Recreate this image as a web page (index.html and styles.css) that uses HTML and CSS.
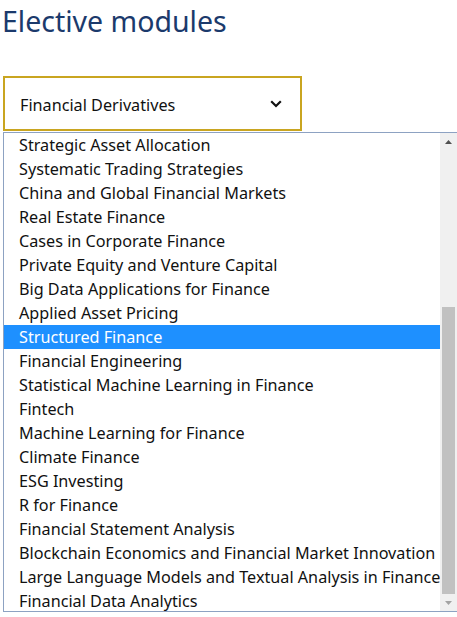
FILE: index.html
```html
<!DOCTYPE html>
<html lang="en">
<head>
<meta charset="utf-8">
<title>Elective modules</title>
<link rel="stylesheet" href="styles.css">
</head>
<body>
<main class="page">
  <h1 class="title">Elective modules</h1>
  <div class="picker">
    <div class="picker-field">
      <span class="picker-value">Financial Derivatives</span>
      <svg class="chevron" width="12" height="8" viewBox="0 0 12 8" aria-hidden="true">
        <polyline points="1.2,1.2 6,6 10.8,1.2" fill="none" stroke="#111" stroke-width="2.2"/>
      </svg>
    </div>
    <div class="listbox">
      <ul class="options">
        <li class="option">Strategic Asset Allocation</li>
        <li class="option">Systematic Trading Strategies</li>
        <li class="option">China and Global Financial Markets</li>
        <li class="option">Real Estate Finance</li>
        <li class="option">Cases in Corporate Finance</li>
        <li class="option">Private Equity and Venture Capital</li>
        <li class="option">Big Data Applications for Finance</li>
        <li class="option">Applied Asset Pricing</li>
        <li class="option is-active">Structured Finance</li>
        <li class="option">Financial Engineering</li>
        <li class="option">Statistical Machine Learning in Finance</li>
        <li class="option">Fintech</li>
        <li class="option">Machine Learning for Finance</li>
        <li class="option">Climate Finance</li>
        <li class="option">ESG Investing</li>
        <li class="option">R for Finance</li>
        <li class="option">Financial Statement Analysis</li>
        <li class="option">Blockchain Economics and Financial Market Innovation</li>
        <li class="option">Large Language Models and Textual Analysis in Finance</li>
        <li class="option">Financial Data Analytics</li>
      </ul>
      <div class="scrollbar" aria-hidden="true">
        <div class="scroll-btn">
          <svg width="7" height="4" viewBox="0 0 7 4"><polygon points="0,4 3.5,0 7,4" fill="#505050"/></svg>
        </div>
        <div class="scroll-track">
          <div class="scroll-thumb" style="height: 287px"></div>
        </div>
        <div class="scroll-btn">
          <svg width="7" height="4" viewBox="0 0 7 4"><polygon points="0,0 3.5,4 7,0" fill="#a3a3a3"/></svg>
        </div>
      </div>
    </div>
  </div>
</main>
</body>
</html>
```
FILE: styles.css
```css
html, body {
  margin: 0;
  padding: 0;
  background: #fff;
}

.page {
  padding: 0 0 0 3px;
  font-family: "Noto Sans", "Open Sans", sans-serif;
  color: #111;
}

.title {
  margin: 0 0 0 -1px;
  padding-top: 2px;
  font-size: 28.5px;
  line-height: 38px;
  font-weight: 400;
  color: #1b3a6c;
}

.picker {
  margin-top: 36px;
  width: 455px;
}

.picker-field {
  box-sizing: border-box;
  width: 299px;
  height: 55px;
  border: 2px solid #c9a520;
  display: flex;
  align-items: center;
  justify-content: space-between;
  padding: 2px 18px 0 15px;
  font-size: 16.2px;
}

.chevron {
  display: block;
  margin-top: -1px;
}

/* listbox: option rows beside a classic scrollbar */
.listbox {
  box-sizing: border-box;
  margin-top: 1px;
  height: 480px;
  border: 1px solid #8da2c2;
  display: flex;
  overflow: hidden;
}

.options {
  flex: 1;
  min-width: 0;
  list-style: none;
  margin: 0;
  padding: 0;
  font-size: 16.2px;
  line-height: 24px;
}

.option {
  padding-left: 15px;
  white-space: nowrap;
  color: #111;
}

.option.is-active {
  background: #1e90ff;
  color: #fff;
}

.scrollbar {
  width: 17px;
  flex: none;
  display: flex;
  flex-direction: column;
  background: #f0f0f0;
}

.scroll-btn {
  height: 17px;
  flex: none;
  display: flex;
  align-items: center;
  justify-content: center;
}

.scroll-track {
  flex: 1;
  display: flex;
  flex-direction: column;
  justify-content: flex-end;
  padding: 0 2px;
}

.scroll-thumb {
  background: #c1c1c1;
}
```
